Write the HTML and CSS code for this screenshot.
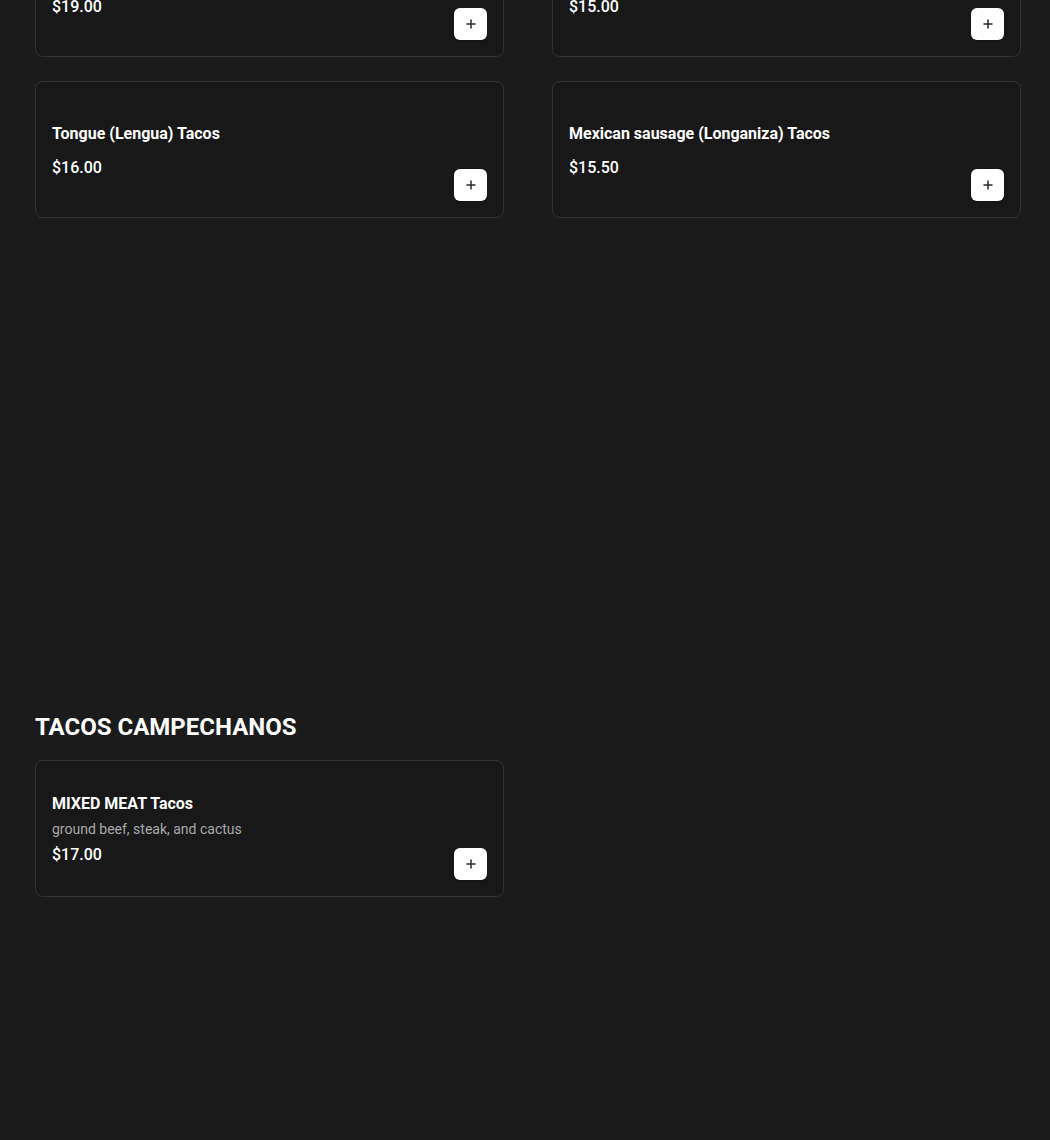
FILE: index.html
```html
<!DOCTYPE html>
<html lang="en">
<head>
<meta charset="utf-8">
<title>Menu</title>
<link rel="stylesheet" href="styles.css">
</head>
<body>
<main class="menu">
  <section class="category category--scrolled">
    <div class="grid">
      <article class="item">
        <div class="info">
          <h3 class="title">Steak (Asada) Tacos</h3>
          <p class="price">$19.00</p>
        </div>
        <button class="add" aria-label="Add"><svg viewBox="0 0 12 12" width="12" height="12"><path d="M6 1.5v9M1.5 6h9" stroke="currentColor" stroke-width="1.5" fill="none"/></svg></button>
      </article>
      <article class="item">
        <div class="info">
          <h3 class="title">Marinated pork (Pastor) Tacos</h3>
          <p class="price">$15.00</p>
        </div>
        <button class="add" aria-label="Add"><svg viewBox="0 0 12 12" width="12" height="12"><path d="M6 1.5v9M1.5 6h9" stroke="currentColor" stroke-width="1.5" fill="none"/></svg></button>
      </article>
      <article class="item">
        <div class="info">
          <h3 class="title">Tongue (Lengua) Tacos</h3>
          <p class="price">$16.00</p>
        </div>
        <button class="add" aria-label="Add"><svg viewBox="0 0 12 12" width="12" height="12"><path d="M6 1.5v9M1.5 6h9" stroke="currentColor" stroke-width="1.5" fill="none"/></svg></button>
      </article>
      <article class="item">
        <div class="info">
          <h3 class="title">Mexican sausage (Longaniza) Tacos</h3>
          <p class="price">$15.50</p>
        </div>
        <button class="add" aria-label="Add"><svg viewBox="0 0 12 12" width="12" height="12"><path d="M6 1.5v9M1.5 6h9" stroke="currentColor" stroke-width="1.5" fill="none"/></svg></button>
      </article>
    </div>
  </section>

  <section class="category category--spaced">
    <h2 class="heading">TACOS CAMPECHANOS</h2>
    <div class="grid">
      <article class="item">
        <div class="info">
          <h3 class="title">MIXED MEAT Tacos</h3>
          <p class="desc">ground beef, steak, and cactus</p>
          <p class="price">$17.00</p>
        </div>
        <button class="add" aria-label="Add"><svg viewBox="0 0 12 12" width="12" height="12"><path d="M6 1.5v9M1.5 6h9" stroke="currentColor" stroke-width="1.5" fill="none"/></svg></button>
      </article>
    </div>
  </section>
</main>
</body>
</html>
```

FILE: styles.css
```css
* { box-sizing: border-box; }

html, body {
  margin: 0;
  padding: 0;
  background: #1b1b1b;
  color: #ffffff;
  font-family: Roboto, "Noto Sans", "Liberation Sans", sans-serif;
}

.menu {
  padding: 0 29px 0 35px;
  width: 1050px;
  height: 1140px;
  overflow: hidden;
}

.category--scrolled {
  margin-top: -80px;
}

.category--spaced {
  margin-top: 493px;
}

.heading {
  margin: 0 0 17px;
  font-size: 24px;
  line-height: 32px;
  font-weight: 700;
  letter-spacing: 0;
}

.grid {
  display: grid;
  grid-template-columns: 469px 469px;
  column-gap: 48px;
  row-gap: 24px;
}

.item {
  display: flex;
  justify-content: space-between;
  align-items: flex-end;
  min-height: 137px;
  padding: 16px;
  background: #181818;
  border: 1px solid #333333;
  border-radius: 8px;
}

.info {
  align-self: center;
  display: flex;
  flex-direction: column;
  margin-top: 2px;
}

.title {
  margin: 0;
  font-size: 16px;
  line-height: 24px;
  font-weight: 700;
}

.desc {
  margin: 3px 0 0;
  font-size: 14px;
  line-height: 20px;
  color: #a8a8a8;
}

.price {
  margin: 4px 0 0;
  font-size: 16px;
  line-height: 24px;
  font-weight: 500;
}

.title + .price {
  margin-top: 10px;
}

.add {
  flex: none;
  width: 33px;
  height: 32px;
  padding: 0;
  display: flex;
  align-items: center;
  justify-content: center;
  background: #ffffff;
  color: #2a2a2a;
  border: none;
  border-radius: 6px;
  box-shadow: 0 1px 2px rgba(0,0,0,0.3);
  cursor: pointer;
}
```
